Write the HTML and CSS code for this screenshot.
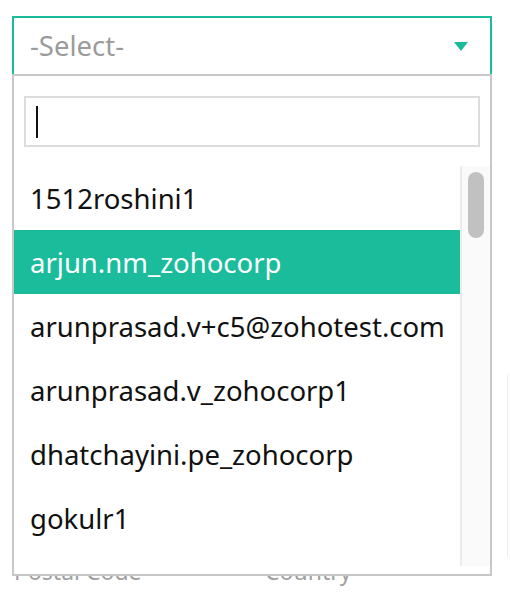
FILE: index.html
```html
<!DOCTYPE html>
<html>
<head>
<meta charset="utf-8">
<link rel="stylesheet" href="styles.css">
</head>
<body>
<div class="form">
  <div class="select">
    <span class="placeholder">-Select-</span>
    <svg class="arrow" width="14" height="9" viewBox="0 0 14 9"><path d="M0 0H14L7 9Z" fill="#1abc9c"/></svg>
  </div>
  <div class="under">
    <div class="edge"></div>
    <div class="labels">
      <span class="label">Postal Code</span>
      <span class="label country">Country</span>
    </div>
  </div>
  <div class="panel">
    <div class="search"><span class="caret"></span></div>
    <div class="list">
      <div class="items">
        <div class="item">1512roshini1</div>
        <div class="item active">arjun.nm_zohocorp</div>
        <div class="item">arunprasad.v+c5@zohotest.com</div>
        <div class="item">arunprasad.v_zohocorp1</div>
        <div class="item">dhatchayini.pe_zohocorp</div>
        <div class="item">gokulr1</div>
      </div>
      <div class="track"><div class="thumb"></div></div>
    </div>
  </div>
</div>
</body>
</html>
```

FILE: styles.css
```css
html, body {
  margin: 0;
  padding: 0;
  background: #fff;
}
body {
  font-family: "Noto Sans", "Open Sans", sans-serif;
  width: 510px;
  height: 592px;
  overflow: hidden;
}
.form {
  position: relative;
  padding: 16px 18px 0 12px;
}
.select {
  box-sizing: border-box;
  width: 480px;
  height: 58px;
  border: 2px solid #1abc9c;
  border-bottom: none;
  display: flex;
  align-items: center;
  justify-content: space-between;
  padding: 0 22px 0 16px;
}
.placeholder {
  color: #9b9b9b;
  font-size: 27.5px;
  line-height: 34px;
}
.arrow {
  display: block;
}
.under {
  position: relative;
  height: 518px;
}
.edge {
  position: absolute;
  left: 495px;
  top: 301px;
  width: 1px;
  height: 182px;
  background: #ececec;
}
.labels {
  position: absolute;
  left: 2px;
  top: 481px;
  display: flex;
}
.label {
  color: #a0a0a0;
  font-size: 23px;
  line-height: 32px;
  width: 251px;
}
.panel {
  position: absolute;
  left: 12px;
  top: 74px;
  box-sizing: border-box;
  width: 480px;
  height: 502px;
  border: 2px solid #c8c8c8;
  background: #fff;
  padding: 20px 0 7px 0;
}
.search {
  box-sizing: border-box;
  margin: 0 10px;
  height: 51px;
  border: 2px solid #dcdcdc;
  display: flex;
  align-items: center;
  padding-left: 10px;
}
.caret {
  width: 2px;
  height: 32px;
  background: #111;
}
.list {
  margin-top: 19px;
  height: 400px;
  display: flex;
  overflow: hidden;
}
.items {
  flex: 1;
}
.item {
  height: 64px;
  display: flex;
  align-items: center;
  padding-left: 16px;
  font-size: 27.5px;
  color: #111;
  white-space: nowrap;
}
.item.active {
  background: #1abc9c;
  color: #fff;
}
.track {
  box-sizing: border-box;
  width: 30px;
  background: #fafafa;
  border-left: 2px solid #ebebeb;
  padding: 6px 0 0 6px;
}
.thumb {
  width: 16px;
  height: 66px;
  border-radius: 8px;
  background: #c1c1c1;
}
```
